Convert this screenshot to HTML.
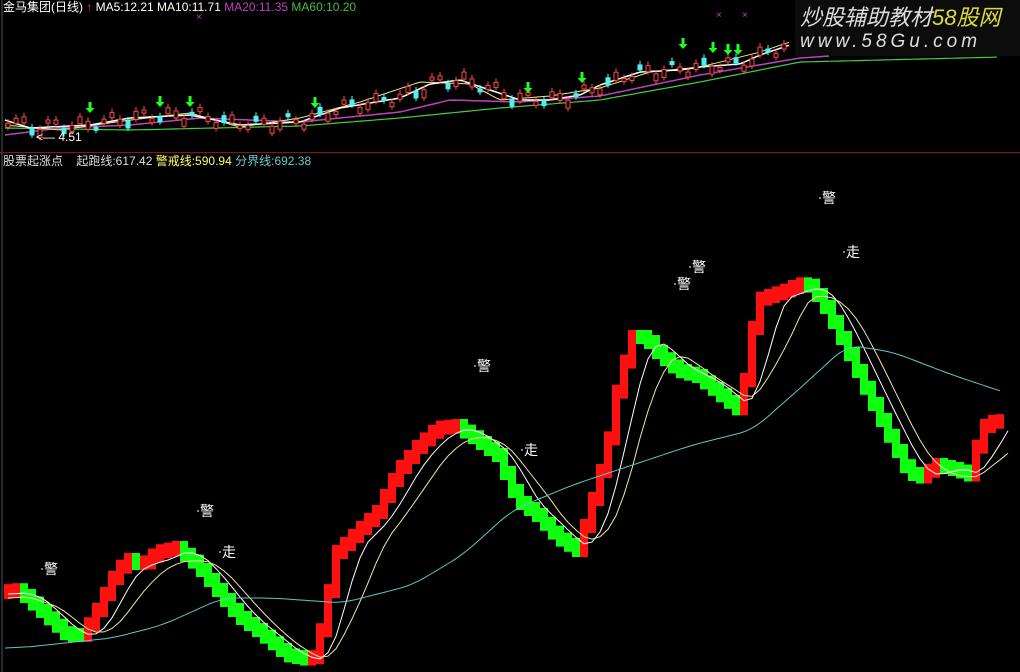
<!DOCTYPE html>
<html><head><meta charset="utf-8"><style>
html,body{margin:0;padding:0;background:#000;width:1020px;height:672px;overflow:hidden}
#c{position:absolute;left:0;top:0}
.t{position:absolute;font-family:"Liberation Sans","Noto Sans CJK SC",sans-serif;font-size:12px;white-space:nowrap;line-height:14px}
</style></head><body>
<svg id="c" width="1020" height="672" xmlns="http://www.w3.org/2000/svg">
<rect width="1020" height="672" fill="#000"/>
<line x1="2" y1="0" x2="2" y2="672" stroke="#555" stroke-width="1"/>
<line x1="0" y1="152.5" x2="1020" y2="152.5" stroke="#8a1030" stroke-width="1"/>
<rect x="795" y="0" width="225" height="56" fill="#0c0c0c"/>
<g id="gtop"></g>
<g id="gbot"></g>
<g id="glbl" font-family="Liberation Sans,Noto Sans CJK SC,sans-serif" font-size="14" fill="#fff"></g>
</svg>
<div class="t" style="left:3px;top:0px;color:#fff">金马集团(日线) <span style="color:#f44">↑</span> MA5:12.21 <span style="color:#ffe">MA10:11.71</span> <span style="color:#c040c0">MA20:11.35</span> <span style="color:#40c040">MA60:10.20</span></div>
<div class="t" style="left:3px;top:154px;color:#ddd">股票起涨点 &nbsp;&nbsp;&nbsp;起跑线:617.42 <span style="color:#ff6">警戒线:590.94</span> <span style="color:#6cc">分界线:692.38</span></div>
<div class="t" style="left:36px;top:130px;color:#fff">&lt;— 4.51</div>
<div class="t" style="left:800px;top:6px;color:#ddd;font-size:22px;line-height:24px;font-style:italic">炒股辅助教材<span style="color:#dd3">58股网</span></div>
<div class="t" style="left:800px;top:32px;color:#ddd;font-size:19px;line-height:20px;letter-spacing:4px;font-style:italic">www.58Gu.com</div>
<script>
(function(){
function interp(pts,x){for(var i=0;i<pts.length-1;i++){if(x>=pts[i][0]&&x<=pts[i+1][0]){var t=(x-pts[i][0])/(pts[i+1][0]-pts[i][0]);return pts[i][1]+t*(pts[i+1][1]-pts[i][1]);}}return x<pts[0][0]?pts[0][1]:pts[pts.length-1][1];}
var ns="http://www.w3.org/2000/svg";
function el(p,n,a){var e=document.createElementNS(ns,n);for(var k in a)e.setAttribute(k,a[k]);p.appendChild(e);return e;}
var gb=document.getElementById('gbot'),gt=document.getElementById('gtop'),gl=document.getElementById('glbl');
var P=[[4,592],[22,590],[30,598],[70,635],[86,635],[100,610],[120,570],[132,560],[145,565],[160,552],[180,548],[200,565],[240,615],[260,630],[290,655],[315,660],[322,640],[340,552],[360,532],[380,512],[400,472],[420,447],[440,428],[460,426],[480,440],[500,455],[520,500],[540,515],[560,537],[580,550],[590,520],[610,450],[622,380],[636,337],[648,337],[660,352],[680,370],[700,376],[720,392],[742,410],[750,370],[760,300],[772,296],[790,290],[802,284],[814,286],[830,310],[850,350],[870,392],[890,432],[910,470],[922,478],[940,465],[960,470],[976,476],[982,432],[992,422],[1006,421]];
var ys=[],xs=[];
for(var x=4;x<=1006;x+=8){xs.push(x);ys.push(interp(P,x));}
for(var i=1;i<xs.length;i++){var a=ys[i-1],b=ys[i];var up=b<a-0.5;var lo=Math.min(a,b)-7,hi=Math.max(a,b)+7;el(gb,'rect',{x:xs[i-1],y:lo,width:8,height:hi-lo,fill:up?'#ff1010':'#10ff10'});}
function ma(arr,n,sh){var r=[];for(var i=0;i<arr.length;i++){var s=0,c=0;for(var j=Math.max(0,i-n+1);j<=i;j++){s+=arr[j];c++;}r.push(s/c+sh);}return r;}
function line(g,X,Y,col,w){var d='';X.forEach(function(x,i){d+=(i?'L':'M')+x.toFixed(1)+' '+Y[i].toFixed(1);});el(g,'path',{d:d,fill:'none',stroke:col,'stroke-width':w||1});}
var X2=xs.map(function(x){return x+4;});
line(gb,X2,ma(ys,4,2),'#ffffff',1);
line(gb,X2,ma(ys,7,6),'#f0e8a0',1);
var C=[[5,648],[100,638],[150,625],[210,598],[260,598],[330,603],[400,585],[450,555],[500,510],[560,485],[620,465],[680,445],[740,430],[780,395],[835,345],[880,352],[940,375],[1000,395]];
var CX=[],CY=[];for(var x=5;x<=1000;x+=5){CX.push(x);CY.push(interp(C,x));}
line(gb,CX,ma(CY,6,0),'#60c8c8',1);
[[44,574,'警'],[200,516,'警'],[477,371,'警'],[677,289,'警'],[692,272,'警'],[822,203,'警'],[222,557,'走'],[524,455,'走'],[846,257,'走']].forEach(function(l){el(gl,'circle',{cx:l[0]-2,cy:l[1]-5,r:1,fill:'#aaa'});var t=el(gl,'text',{x:l[0],y:l[1]});t.textContent=l[2];});
var W=[[5,120],[30,128],[90,125],[130,118],[190,115],[240,125],[300,122],[340,108],[400,98],[430,84],[460,80],[490,90],[520,100],[550,100],[580,95],[600,85],[640,72],[680,70],[700,67],[740,64],[760,55],[790,45]];
var G=[[5,128],[130,130],[300,126],[400,118],[500,108],[600,100],[700,82],[800,62],[1000,57]];
var Pu=[[5,135],[60,128],[130,125],[200,118],[300,122],[400,112],[450,100],[520,102],[600,96],[700,75],[800,58],[830,56]];
var Y5=[[5,125],[60,130],[130,120],[190,113],[240,127],[300,118],[360,102],[420,82],[470,84],[500,100],[550,96],[600,88],[650,72],[700,67],[760,52],[790,42]];
function pl(pts,col,w){var X=[],Y=[];for(var x=pts[0][0];x<=pts[pts.length-1][0];x+=4){X.push(x);Y.push(interp(pts,x));}line(gt,X,Y,col,w);}
pl(G,'#40d040',1.2);pl(Pu,'#c040c0',1.5);pl(Y5,'#f0f080',1);pl(W,'#ffffff',1.5);
var k=0;for(var x=6;x<790;x+=8){k++;var y=interp(W,x)+Math.sin(k*1.7)*6-3;var h=3+((k*7)%6);var cy=(k%4==0);
el(gt,'line',{x1:x+2,y1:y-4,x2:x+2,y2:y+h+3,stroke:cy?'#5ff':'#f55','stroke-width':1});
el(gt,'rect',{x:x,y:y,width:4,height:h,fill:cy?'#50f0f0':'#000',stroke:cy?'#50f0f0':'#f44','stroke-width':1});}
[[90,108],[160,102],[190,102],[315,103],[528,88],[582,78],[683,44],[713,48],[728,50],[738,50]].forEach(function(a){var x=a[0],y=a[1];el(gt,'path',{d:'M'+(x-1.5)+' '+(y-6)+'h3v6h3l-4.5 5l-4.5-5h3z',fill:'#20ff20'});});
[[199,17],[719,15],[745,15]].forEach(function(a){var t=el(gt,'text',{x:a[0]-3,y:a[1]+3,fill:'#c040c0','font-size':'10','font-family':'Liberation Sans,sans-serif'});t.textContent='×';});
})();
</script>
</body></html>
